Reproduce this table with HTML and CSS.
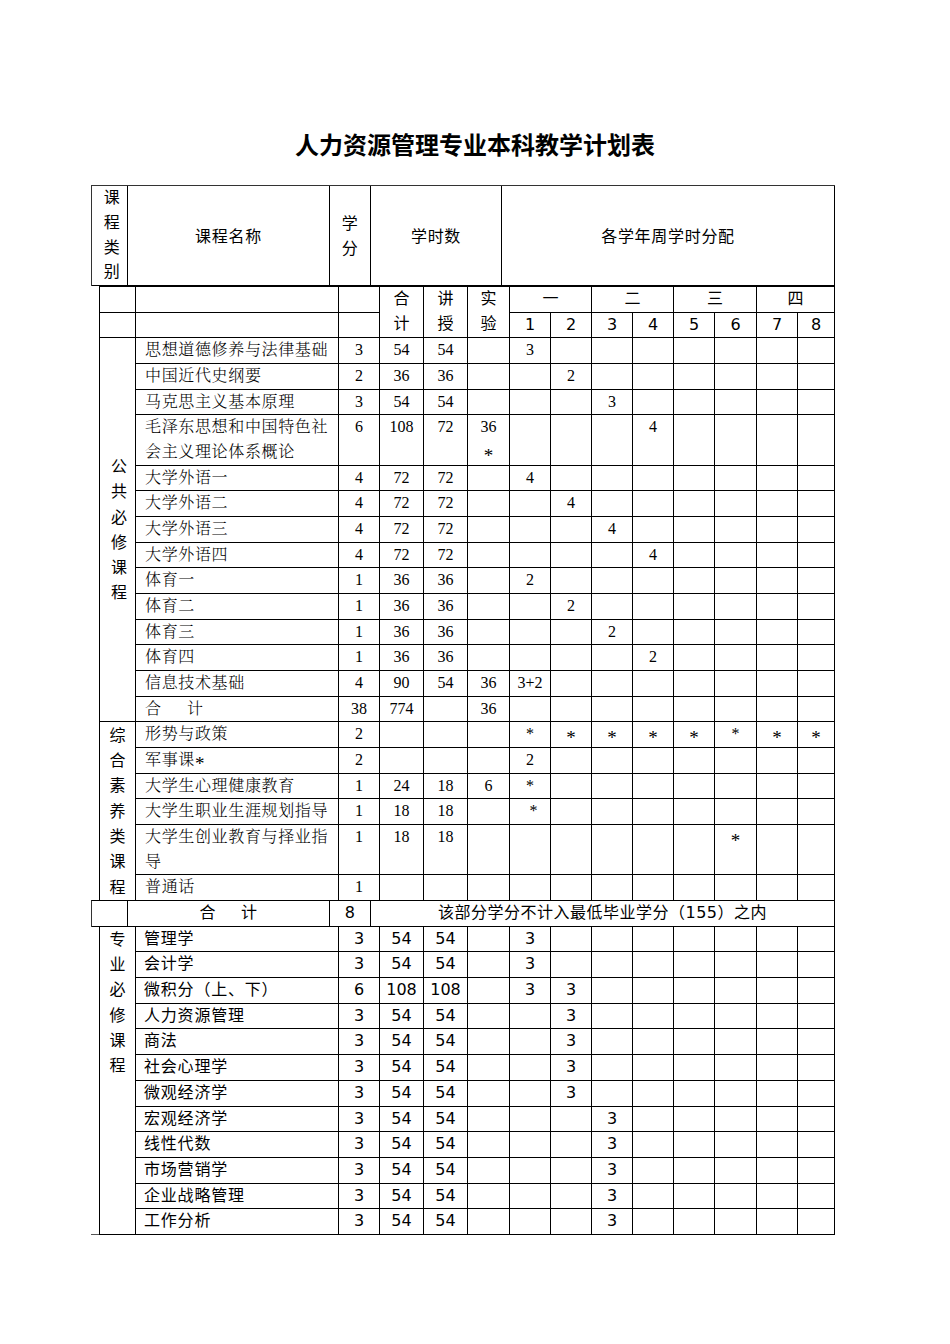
FILE: index.html
```html
<!DOCTYPE html>
<html lang="zh-CN">
<head>
<meta charset="utf-8">
<title>人力资源管理专业本科教学计划表</title>
<link rel="stylesheet" href="styles.css">
</head>
<body>
<div class="page">
  <h1 class="title">人力资源管理专业本科教学计划表</h1>

  <table class="head">
    <colgroup><col class="h1"><col class="h2"><col class="h3"><col class="h4"><col class="h5"></colgroup>
    <tr>
      <td class="vt-head">课<br>程<br>类<br>别</td>
      <td>课程名称</td>
      <td>学<br>分</td>
      <td>学时数</td>
      <td>各学年周学时分配</td>
    </tr>
  </table>

  <table class="grid main">
    <colgroup>
      <col class="c1"><col class="c2"><col class="c3"><col class="c4"><col class="c5"><col class="c6">
      <col class="s1"><col class="s2"><col class="s3"><col class="s4"><col class="s5"><col class="s6"><col class="s7"><col class="s8">
    </colgroup>
    <tr class="hrow">
      <td></td><td></td><td></td>
      <td rowspan="2" class="top">合<br>计</td>
      <td rowspan="2" class="top">讲<br>授</td>
      <td rowspan="2" class="top">实<br>验</td>
      <td colspan="2">一</td><td colspan="2">二</td><td colspan="2">三</td><td colspan="2">四</td>
    </tr>
    <tr class="hrow">
      <td></td><td></td><td></td>
      <td>1</td><td>2</td><td>3</td><td>4</td><td>5</td><td>6</td><td>7</td><td>8</td>
    </tr>

    <tr class="body">
      <td rowspan="14" class="vt">公<br>共<br>必<br>修<br>课<br>程</td>
      <td class="name">思想道德修养与法律基础</td><td>3</td><td>54</td><td>54</td><td></td>
      <td>3</td><td></td><td></td><td></td><td></td><td></td><td></td><td></td>
    </tr>
    <tr class="body">
      <td class="name">中国近代史纲要</td><td>2</td><td>36</td><td>36</td><td></td>
      <td></td><td>2</td><td></td><td></td><td></td><td></td><td></td><td></td>
    </tr>
    <tr class="body">
      <td class="name">马克思主义基本原理</td><td>3</td><td>54</td><td>54</td><td></td>
      <td></td><td></td><td>3</td><td></td><td></td><td></td><td></td><td></td>
    </tr>
    <tr class="body">
      <td class="name">毛泽东思想和中国特色社会主义理论体系概论</td><td>6</td><td>108</td><td>72</td><td>36<br><span class="star">*</span></td>
      <td></td><td></td><td></td><td>4</td><td></td><td></td><td></td><td></td>
    </tr>
    <tr class="body">
      <td class="name">大学外语一</td><td>4</td><td>72</td><td>72</td><td></td>
      <td>4</td><td></td><td></td><td></td><td></td><td></td><td></td><td></td>
    </tr>
    <tr class="body">
      <td class="name">大学外语二</td><td>4</td><td>72</td><td>72</td><td></td>
      <td></td><td>4</td><td></td><td></td><td></td><td></td><td></td><td></td>
    </tr>
    <tr class="body">
      <td class="name">大学外语三</td><td>4</td><td>72</td><td>72</td><td></td>
      <td></td><td></td><td>4</td><td></td><td></td><td></td><td></td><td></td>
    </tr>
    <tr class="body">
      <td class="name">大学外语四</td><td>4</td><td>72</td><td>72</td><td></td>
      <td></td><td></td><td></td><td>4</td><td></td><td></td><td></td><td></td>
    </tr>
    <tr class="body">
      <td class="name">体育一</td><td>1</td><td>36</td><td>36</td><td></td>
      <td>2</td><td></td><td></td><td></td><td></td><td></td><td></td><td></td>
    </tr>
    <tr class="body">
      <td class="name">体育二</td><td>1</td><td>36</td><td>36</td><td></td>
      <td></td><td>2</td><td></td><td></td><td></td><td></td><td></td><td></td>
    </tr>
    <tr class="body">
      <td class="name">体育三</td><td>1</td><td>36</td><td>36</td><td></td>
      <td></td><td></td><td>2</td><td></td><td></td><td></td><td></td><td></td>
    </tr>
    <tr class="body">
      <td class="name">体育四</td><td>1</td><td>36</td><td>36</td><td></td>
      <td></td><td></td><td></td><td>2</td><td></td><td></td><td></td><td></td>
    </tr>
    <tr class="body">
      <td class="name">信息技术基础</td><td>4</td><td>90</td><td>54</td><td>36</td>
      <td>3+2</td><td></td><td></td><td></td><td></td><td></td><td></td><td></td>
    </tr>
    <tr class="body">
      <td class="name">合&emsp;&ensp;计</td><td>38</td><td>774</td><td></td><td>36</td>
      <td></td><td></td><td></td><td></td><td></td><td></td><td></td><td></td>
    </tr>

    <tr class="body">
      <td rowspan="6" class="vt vt-last">综<br>合<br>素<br>养<br>类<br>课<br>程</td>
      <td class="name">形势与政策</td><td>2</td><td></td><td></td><td></td>
      <td>*</td><td><span class="star">*</span></td><td><span class="star">*</span></td><td><span class="star">*</span></td><td><span class="star">*</span></td><td>*</td><td><span class="star">*</span></td><td><span class="star">*</span></td>
    </tr>
    <tr class="body">
      <td class="name">军事课<span class="star">*</span></td><td>2</td><td></td><td></td><td></td>
      <td>2</td><td></td><td></td><td></td><td></td><td></td><td></td><td></td>
    </tr>
    <tr class="body">
      <td class="name">大学生心理健康教育</td><td>1</td><td>24</td><td>18</td><td>6</td>
      <td>*</td><td></td><td></td><td></td><td></td><td></td><td></td><td></td>
    </tr>
    <tr class="body">
      <td class="name">大学生职业生涯规划指导</td><td>1</td><td>18</td><td>18</td><td></td>
      <td class="nudge">*</td><td></td><td></td><td></td><td></td><td></td><td></td><td></td>
    </tr>
    <tr class="body">
      <td class="name">大学生创业教育与择业指导</td><td>1</td><td>18</td><td>18</td><td></td>
      <td></td><td></td><td></td><td></td><td></td><td><span class="star">*</span></td><td></td><td></td>
    </tr>
    <tr class="body last">
      <td class="name">普通话</td><td>1</td><td></td><td></td><td></td>
      <td></td><td></td><td></td><td></td><td></td><td></td><td></td><td></td>
    </tr>
  </table>

  <table class="total">
    <colgroup><col class="t1"><col class="t2"><col class="t3"><col class="t4"></colgroup>
    <tr>
      <td></td>
      <td>合&emsp;&ensp;计</td>
      <td>8</td>
      <td>该部分学分不计入最低毕业学分（155）之内</td>
    </tr>
  </table>

  <div class="sec3">
    <div class="stub"></div>
    <table class="grid major">
      <colgroup>
        <col class="c1"><col class="c2"><col class="c3"><col class="c4"><col class="c5"><col class="c6">
        <col class="s1"><col class="s2"><col class="s3"><col class="s4"><col class="s5"><col class="s6"><col class="s7"><col class="s8">
      </colgroup>
      <tr>
        <td rowspan="12" class="vt vt-top">专<br>业<br>必<br>修<br>课<br>程</td>
        <td class="name">管理学</td><td>3</td><td>54</td><td>54</td><td></td>
        <td>3</td><td></td><td></td><td></td><td></td><td></td><td></td><td></td>
      </tr>
      <tr>
        <td class="name">会计学</td><td>3</td><td>54</td><td>54</td><td></td>
        <td>3</td><td></td><td></td><td></td><td></td><td></td><td></td><td></td>
      </tr>
      <tr>
        <td class="name">微积分（上、下）</td><td>6</td><td>108</td><td>108</td><td></td>
        <td>3</td><td>3</td><td></td><td></td><td></td><td></td><td></td><td></td>
      </tr>
      <tr>
        <td class="name">人力资源管理</td><td>3</td><td>54</td><td>54</td><td></td>
        <td></td><td>3</td><td></td><td></td><td></td><td></td><td></td><td></td>
      </tr>
      <tr>
        <td class="name">商法</td><td>3</td><td>54</td><td>54</td><td></td>
        <td></td><td>3</td><td></td><td></td><td></td><td></td><td></td><td></td>
      </tr>
      <tr>
        <td class="name">社会心理学</td><td>3</td><td>54</td><td>54</td><td></td>
        <td></td><td>3</td><td></td><td></td><td></td><td></td><td></td><td></td>
      </tr>
      <tr>
        <td class="name">微观经济学</td><td>3</td><td>54</td><td>54</td><td></td>
        <td></td><td>3</td><td></td><td></td><td></td><td></td><td></td><td></td>
      </tr>
      <tr>
        <td class="name">宏观经济学</td><td>3</td><td>54</td><td>54</td><td></td>
        <td></td><td></td><td>3</td><td></td><td></td><td></td><td></td><td></td>
      </tr>
      <tr>
        <td class="name">线性代数</td><td>3</td><td>54</td><td>54</td><td></td>
        <td></td><td></td><td>3</td><td></td><td></td><td></td><td></td><td></td>
      </tr>
      <tr>
        <td class="name">市场营销学</td><td>3</td><td>54</td><td>54</td><td></td>
        <td></td><td></td><td>3</td><td></td><td></td><td></td><td></td><td></td>
      </tr>
      <tr>
        <td class="name">企业战略管理</td><td>3</td><td>54</td><td>54</td><td></td>
        <td></td><td></td><td>3</td><td></td><td></td><td></td><td></td><td></td>
      </tr>
      <tr>
        <td class="name">工作分析</td><td>3</td><td>54</td><td>54</td><td></td>
        <td></td><td></td><td>3</td><td></td><td></td><td></td><td></td><td></td>
      </tr>
    </table>
  </div>
</div>
</body>
</html>
```

FILE: styles.css
```css
html, body {
  margin: 0;
  padding: 0;
  background: #ffffff;
}

.page {
  width: 950px;
  padding-top: 129px;
  color: #000;
}

.title {
  margin: 0 0 26px 0;
  font-family: "Noto Sans CJK SC", "Noto Sans CJK TC", sans-serif;
  font-weight: 700;
  font-size: 24px;
  line-height: 30px;
  text-align: center;
  color: #000;
}

table {
  border-collapse: separate;
  border-spacing: 0;
  table-layout: fixed;
}

td {
  box-sizing: border-box;
  padding: 0;
  border-right: 1px solid #000;
  border-bottom: 1px solid #000;
  text-align: center;
  vertical-align: top;
  overflow: hidden;
}

/* ---------- top header ---------- */
.head {
  margin-left: 91px;
  width: 744px;
  border-top: 1px solid #333;
  border-left: 1px solid #333;
  font-family: "DejaVu Sans", "Noto Sans CJK SC", sans-serif;
  font-size: 16px;
  line-height: 24.75px;
}
.head td {
  vertical-align: middle;
  height: 100px;
  letter-spacing: 0.7px;
  padding-top: 3px;
}
.head .h1 { width: 36px; }
.head .h2 { width: 202px; }
.head .h3 { width: 41px; }
.head .h4 { width: 131px; }
.head .h5 { width: 333px; }
.head .vt-head {
  padding-left: 5px;
  padding-top: 0;
}

/* ---------- grid tables ---------- */
.grid {
  width: 736px;
  border-left: 1px solid #000;
}
.grid .c1 { width: 36px; }
.grid .c2 { width: 203px; }
.grid .c3 { width: 41px; }
.grid .c4 { width: 44px; }
.grid .c5 { width: 44px; }
.grid .c6 { width: 42px; }
.grid .s1 { width: 41px; }
.grid .s2 { width: 41px; }
.grid .s3 { width: 41px; }
.grid .s4 { width: 41px; }
.grid .s5 { width: 41px; }
.grid .s6 { width: 42px; }
.grid .s7 { width: 41px; }
.grid .s8 { width: 37px; }

.main {
  margin-left: 99px;
  border-top: 1px solid #000;
  font-family: "Liberation Serif", "Noto Serif CJK SC", "Noto Sans CJK SC", serif;
  font-size: 16px;
  line-height: 24.67px;
}

.main .hrow td {
  font-family: "DejaVu Sans", "Noto Sans CJK SC", sans-serif;
  font-size: 16px;
}
.main .hrow td.top {
  vertical-align: top;
}

.main .body td.name {
  text-align: left;
  padding-left: 9px;
  letter-spacing: 0.65px;
  font-weight: 300;
}

.star {
  line-height: 0;
  font-size: 19px;
  vertical-align: -5px;
  font-family: "Liberation Serif", serif;
  font-weight: 400;
}

.main .last td {
  border-bottom: 0;
}

.vt {
  vertical-align: middle;
  font-family: "DejaVu Sans", "Noto Sans CJK SC", sans-serif;
  font-size: 16px;
  line-height: 25.3px;
  padding-left: 3px;
}
.main .vt-last {
  border-bottom: 0;
  padding-left: 0;
}
.vt-top {
  vertical-align: top;
  padding-left: 0;
}

.nudge {
  padding-left: 7px;
}

/* ---------- total row ---------- */
.total {
  margin-left: 91px;
  width: 744px;
  border-top: 1px solid #000;
  border-left: 1px solid #333;
  font-family: "DejaVu Sans", "Noto Sans CJK SC", sans-serif;
  font-size: 16px;
  line-height: 24.67px;
}
.total td {
  vertical-align: middle;
  letter-spacing: 0.5px;
}
.total .t1 { width: 36px; }
.total .t2 { width: 202px; }
.total .t3 { width: 41px; }
.total .t4 { width: 464px; }

/* ---------- major section ---------- */
.sec3 {
  display: flex;
  align-items: flex-end;
  margin-left: 91px;
}
.stub {
  width: 8px;
  height: 1px;
  background: #555;
}
.major {
  font-family: "DejaVu Sans", "Noto Sans CJK SC", sans-serif;
  font-size: 16px;
  line-height: 24.67px;
}
.major td.name {
  text-align: left;
  padding-left: 8px;
  letter-spacing: 0.8px;
}
```
